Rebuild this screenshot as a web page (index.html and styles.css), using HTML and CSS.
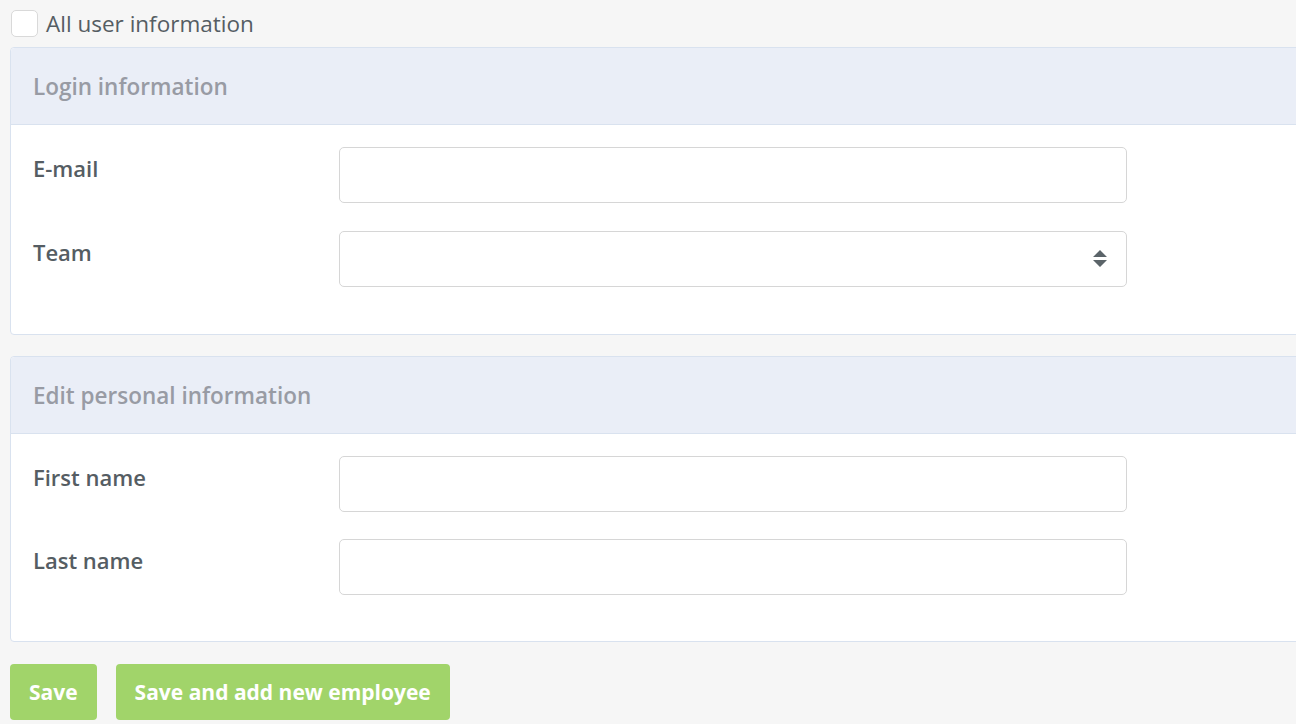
FILE: index.html
```html
<!DOCTYPE html>
<html lang="en">
<head>
  <meta charset="UTF-8" />
  <meta name="viewport" content="width=device-width, initial-scale=1.0"/>
  <title>Employee</title>
  <link rel="stylesheet" href="styles.css">
</head>
<body>
  <label class="check">
    <span class="box"></span>
    <span>All user information</span>
  </label>

  <div class="panel">
    <div class="panel-head">Login information</div>
    <div class="panel-body">
      <div class="row">
        <label>E-mail</label>
        <div class="input"></div>
      </div>
      <div class="row">
        <label>Team</label>
        <div class="input select">
          <svg width="16" height="20" viewBox="0 0 16 20"><path d="M8 1 L15 8 L1 8 Z M1 11 L15 11 L8 18 Z" fill="#5b6469"/></svg>
        </div>
      </div>
    </div>
  </div>

  <div class="panel">
    <div class="panel-head">Edit personal information</div>
    <div class="panel-body tight">
      <div class="row">
        <label>First name</label>
        <div class="input"></div>
      </div>
      <div class="row">
        <label>Last name</label>
        <div class="input"></div>
      </div>
    </div>
  </div>

  <div class="actions">
    <button>Save</button>
    <button>Save and add new employee</button>
  </div>
</body>
</html>
```

FILE: styles.css
```css
body {
  font-family: "Open Sans", Lato, sans-serif;
  background: #f6f6f6;
  color: #555d63;
  margin: 0;
  padding: 9px 0 0 10px;
  overflow: hidden;
}
.check {
  display: flex;
  align-items: center;
  gap: 8px;
  font-size: 22.5px;
  color: #555d63;
  margin-left: 1px;
  height: 28px;
}
.check .box {
  width: 25px;
  height: 25px;
  border: 1px solid #d9d9d9;
  border-radius: 5px;
  background: #fff;
}
.panel {
  margin-top: 10px;
  margin-right: -30px;
  border: 1px solid #d9e2ef;
  border-radius: 4px;
  background: #fff;
}
.panel + .panel {
  margin-top: 21px;
}
.panel-head {
  background: #eaeef7;
  border-bottom: 1px solid #d9e2ef;
  border-radius: 4px 4px 0 0;
  height: 76px;
  display: flex;
  align-items: center;
  padding-left: 22px;
  font-size: 22.5px;
  font-weight: 600;
  color: #989ba4;
}
.panel-body {
  padding: 22px 22px 47px;
  display: flex;
  flex-direction: column;
  gap: 28px;
}
.panel-body.tight {
  gap: 27px;
  padding-bottom: 46px;
}
.row {
  display: grid;
  grid-template-columns: 306px 788px;
}
.row label {
  font-size: 22px;
  font-weight: 600;
  padding-top: 6px;
}
.input {
  height: 54px;
  border: 1px solid #d6d6d6;
  border-radius: 5px;
  background: #fff;
}
.select {
  display: flex;
  align-items: center;
  justify-content: flex-end;
  padding-right: 18px;
}
.actions {
  display: flex;
  gap: 19px;
  margin-top: 22px;
}
button {
  background: #a1d46a;
  color: #fff;
  border: none;
  border-radius: 4px;
  height: 56px;
  padding: 0 19px;
  font-family: inherit;
  font-size: 21px;
  font-weight: bold;
  cursor: pointer;
}
```
